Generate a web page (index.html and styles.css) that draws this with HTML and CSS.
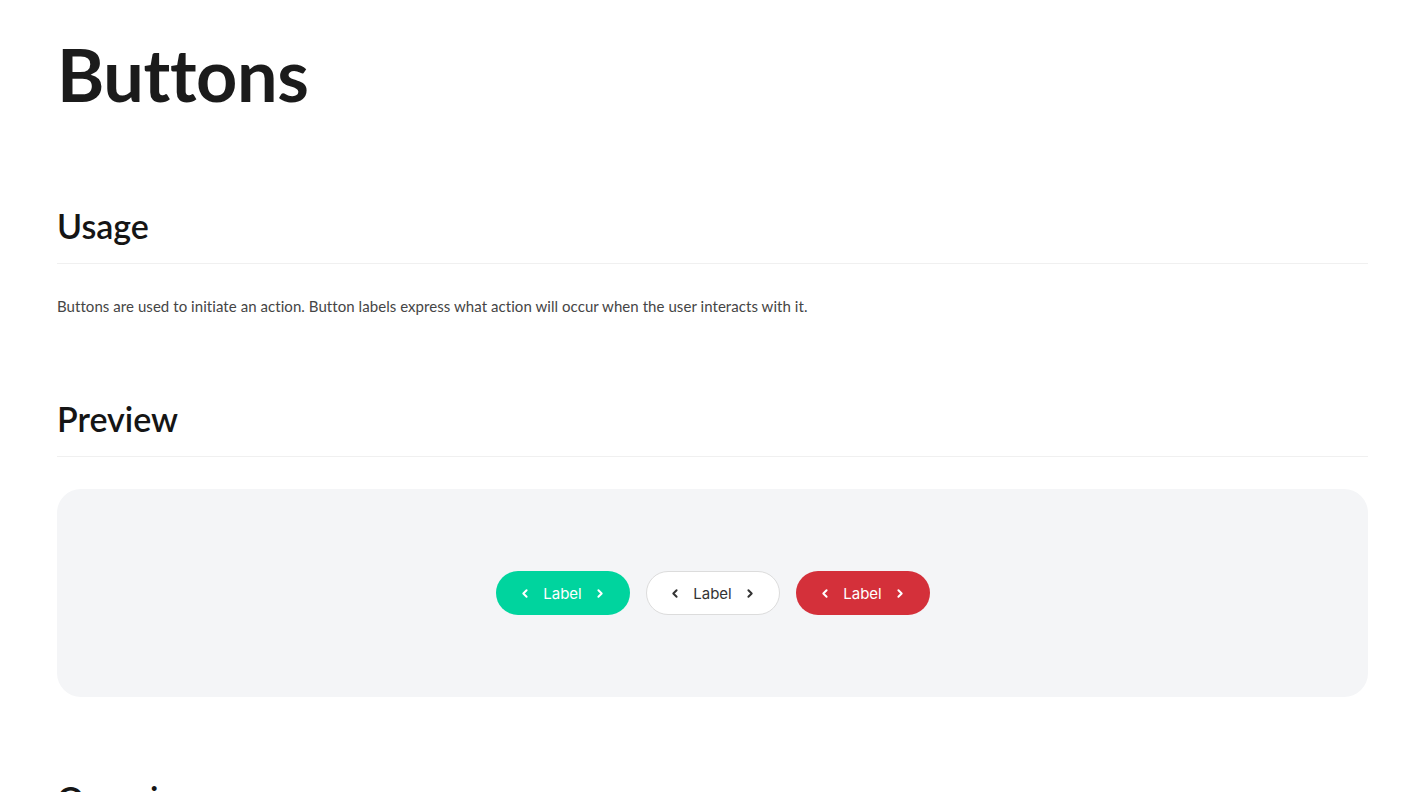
FILE: index.html
```html
<!DOCTYPE html>
<html>
<head>
<meta charset="utf-8">
<link rel="stylesheet" href="styles.css">
</head>
<body>
<main class="page">
  <h1 class="title">Buttons</h1>
  <section class="section usage">
    <h2 class="heading">Usage</h2>
    <p class="text">Buttons are used to initiate an action. Button labels express what action will occur when the user interacts with it.</p>
  </section>
  <section class="section preview">
    <h2 class="heading">Preview</h2>
    <div class="box">
      <button class="btn btn-primary">
        <svg class="chev" viewBox="0 0 10 10"><path d="M6 2 L3 5 L6 8"/></svg>
        <span>Label</span>
        <svg class="chev" viewBox="0 0 10 10"><path d="M4 2 L7 5 L4 8"/></svg>
      </button>
      <button class="btn btn-secondary">
        <svg class="chev" viewBox="0 0 10 10"><path d="M6 2 L3 5 L6 8"/></svg>
        <span>Label</span>
        <svg class="chev" viewBox="0 0 10 10"><path d="M4 2 L7 5 L4 8"/></svg>
      </button>
      <button class="btn btn-danger">
        <svg class="chev" viewBox="0 0 10 10"><path d="M6 2 L3 5 L6 8"/></svg>
        <span>Label</span>
        <svg class="chev" viewBox="0 0 10 10"><path d="M4 2 L7 5 L4 8"/></svg>
      </button>
    </div>
  </section>
  <section class="section overview">
    <h2 class="heading">Overview</h2>
  </section>
</main>
</body>
</html>
```
FILE: styles.css
```css
* { box-sizing: border-box; }
html, body { margin: 0; padding: 0; background: #fff; }
body { font-family: "Lato", "Noto Sans", sans-serif; color: #1a1a1a; overflow: hidden; height: 792px; }
.page { padding: 0 58px 0 57px; }
.title {
  margin: 0;
  padding-top: 34px;
  font-size: 72px;
  line-height: 80px;
  font-weight: 700;
  letter-spacing: -0.4px;
  color: #1b1b1b;
}
.section { margin: 0; }
.heading {
  margin: 0;
  font-size: 34px;
  line-height: 40px;
  font-weight: 600;
  color: #151515;
  padding-bottom: 17px;
  border-bottom: 1px solid #f0f0f0;
}
.usage { margin-top: 92px; }
.text {
  margin: 31px 0 0;
  font-size: 15px;
  line-height: 22px;
  letter-spacing: 0.06px;
  color: #454545;
}
.preview { margin-top: 82px; }
.box {
  margin-top: 32px;
  height: 208px;
  background: #f4f5f7;
  border-radius: 24px;
  display: flex;
  align-items: center;
  justify-content: center;
  gap: 16px;
}
.btn {
  display: inline-flex;
  align-items: center;
  justify-content: center;
  gap: 12px;
  width: 134px;
  height: 44px;
  border-radius: 22px;
  border: 1px solid transparent;
  font-family: "Inter", sans-serif;
  font-size: 15px;
  padding: 0;
  cursor: pointer;
}
.chev { width: 11px; height: 11px; fill: none; stroke: currentColor; stroke-width: 1.8; stroke-linecap: round; stroke-linejoin: round; }
.btn-primary { background: #00d49e; color: #fff; }
.btn-secondary { background: #fff; color: #333; border-color: #dcdcdc; }
.btn-danger { background: #d4303a; color: #fff; }
.overview { margin-top: 82px; }
.overview .heading { border-bottom: none; }
```
